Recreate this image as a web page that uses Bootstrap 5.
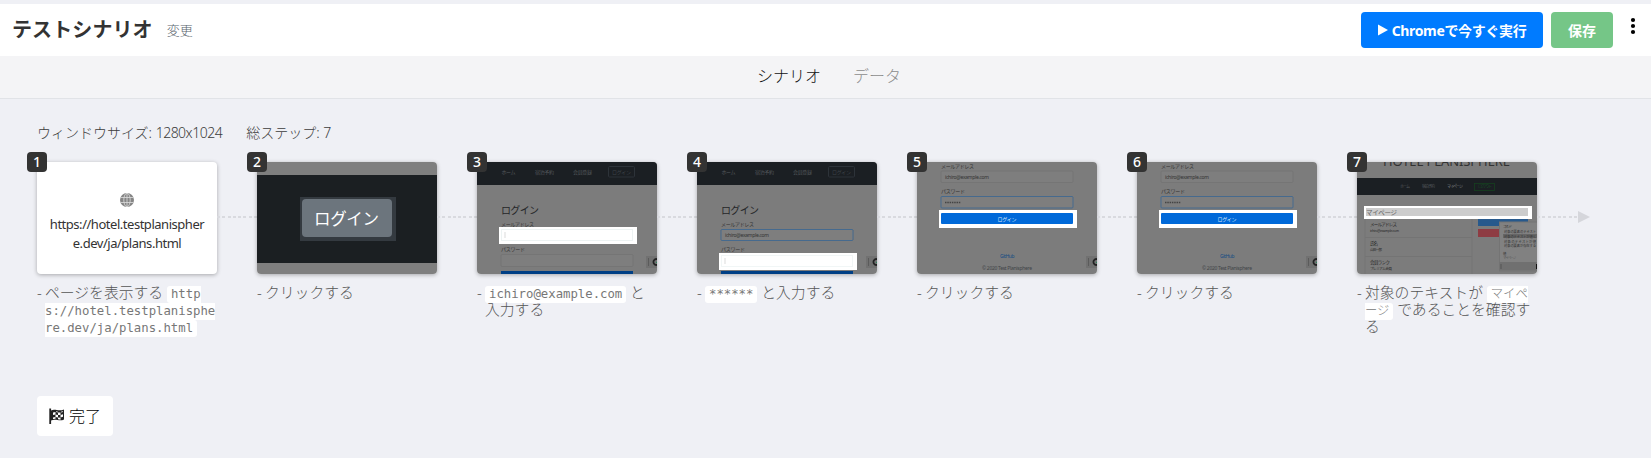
<!DOCTYPE html>
<html lang="ja">
<head>
  <meta charset="UTF-8">
  <meta name="viewport" content="width=device-width, initial-scale=1.0">
  <title>テストシナリオ</title>
  <link href="https://cdn.jsdelivr.net/npm/bootstrap@5.3.0/dist/css/bootstrap.min.css" rel="stylesheet">
  <style>
    body {
      font-family: "Noto Sans", "Noto Sans CJK JP", sans-serif;
      font-size: 14px;
      font-weight: 300;
      color: #333;
      background-color: #eff0f5;
      overflow: hidden;
    }
    .topbar {
      height: 52px;
      margin-top: 4px;
      padding: 0 12px;
    }
    .topbar h1 { font-size: 20px; letter-spacing: .1px; }
    .rename-link { font-size: 13px; color: #59636d; padding-top: 1px; margin-left: 14px; }
    .topbar .btn {
      height: 36px;
      padding: 0 16px;
      font-size: 14px;
      font-weight: 700;
      border: 0;
      border-radius: 4px;
    }
    .btn-run, .btn-run:hover { width: 182px; background-color: #007bff; color: #fff; }
    .btn-run span { letter-spacing: -.35px; }
    .btn-save, .btn-save:hover { width: 62px; background-color: #75c687; color: #fff; }
    .tabs-row {
      height: 43px;
      padding-left: 7px;
      padding-bottom: 3px;
      background-color: #f4f4f6;
      border-bottom: 1px solid #e1e3e7;
    }
    .tabs-row .nav-link { padding: 0 16px; font-size: 16px; color: #8c8c8c; }
    .tabs-row .nav-link.active { color: #111; }
    .scenario { padding: 23px 37px 0; }
    .meta { font-size: 14px; line-height: 21px; color: #3c3c3c; gap: 24px; }
    .meta .size-value { letter-spacing: -.5px; }
    .steps { margin-top: 19px; height: 234px; }
    .step { width: 180px; margin-right: 40px; }
    .thumb {
      height: 112px;
      border-radius: 4px;
      background-color: #fff;
      box-shadow: 0 1px 4px rgba(0, 0, 0, .3);
    }
    .thumb svg { display: block; border-radius: 4px; font-weight: 400; }
    .thumb-url {
      padding: 10px 12px 0;
      font-size: 13px;
      font-weight: 400;
      line-height: 19px;
      letter-spacing: -.47px;
      word-break: break-all;
      color: #333;
    }
    .num {
      left: -10px;
      top: -10px;
      width: 20px;
      height: 20px;
      line-height: 20px;
      border-radius: 4px;
      background-color: #333;
      color: #fff;
      font-size: 14px;
      font-weight: 500;
    }
    .wire {
      left: 180px;
      top: 54px;
      width: 40px;
      height: 2px;
      background: repeating-linear-gradient(90deg, #d9dadf 0 3px, transparent 3px 5.28px);
    }
    .wire-end::after {
      content: "";
      position: absolute;
      right: -13px;
      top: -5px;
      border: 6px solid transparent;
      border-left: 12px solid #d5d6db;
      border-right: 0;
    }
    .caption-text {
      margin-top: 10px;
      padding-left: 8px;
      text-indent: -8px;
      font-size: 14.8px;
      line-height: 17px;
      color: #555;
      word-break: break-all;
    }
    .caption-text .dash { display: inline-block; width: 8px; text-indent: 0; }
    .caption-text code {
      font-family: "DejaVu Sans Mono", "Noto Sans CJK JP", monospace;
      font-size: 12.3px;
      line-height: 1;
      padding: 1px 4px 2px;
      border-radius: 3px;
      background-color: #fff;
      color: #777;
    }
    .btn-done {
      width: 76px;
      height: 40px;
      padding: 0;
      font-size: 16px;
      font-weight: 300;
      border: 0;
      border-radius: 4px;
      background-color: #fff;
      color: #000;
    }
  </style>
</head>
<body>
  <!-- Shared drawings for the form previews -->
  <svg width="0" height="0" class="position-absolute fw-normal">
    <defs>
      <symbol id="captcha" viewBox="0 0 12 12">
        <rect width="12" height="12" fill="#717171"/>
        <path d="M2.5 2v8" stroke="#555" stroke-width=".8"/>
        <path d="M11.5 3.200A3 3 0 1 0 11.5 8.800" fill="none" stroke="#222" stroke-width="1.800"/>
        <path d="M10 6.4h2" stroke="#285" stroke-width="1"/>
      </symbol>
      <symbol id="loginTop" viewBox="0 0 180 112">
        <rect width="180" height="112" fill="#7c7c7c"/>
        <rect width="180" height="23" fill="#1b1f23"/>
        <g font-size="5" fill="#54585c">
          <text x="24.5" y="12" textLength="14">ホーム</text>
          <text x="58" y="12" textLength="19">宿泊予約</text>
          <text x="96" y="12" textLength="19">会員登録</text>
          <text x="135" y="12" textLength="19" fill="#3d4349">ログイン</text>
        </g>
        <rect x="131.5" y="4.500" width="26" height="10.500" rx="1" fill="none" stroke="#2d3339"/>
        <text x="24" y="51.500" font-size="10" textLength="38" fill="#252729">ログイン</text>
        <text x="24" y="64" font-size="5" textLength="33" fill="#333">メールアドレス</text>
        <text x="24" y="89" font-size="5" textLength="24" fill="#333">パスワード</text>
        <rect x="24" y="67.500" width="132" height="11" rx="1" fill="#7e7e7e" stroke="#757575"/>
        <rect x="24" y="92.500" width="132" height="12" rx="1" fill="#7e7e7e" stroke="#757575"/>
        <rect x="24" y="109" width="132" height="3" fill="#003f85"/>
        <use href="#captcha" x="169" y="94" width="12" height="12"/>
      </symbol>
      <symbol id="loginBottom" viewBox="0 0 180 112">
        <rect width="180" height="112" fill="#7c7c7c"/>
        <text x="24" y="5.500" font-size="5" textLength="33" fill="#333">メールアドレス</text>
        <rect x="24" y="9" width="132" height="11.500" rx="1" fill="#7e7e7e" stroke="#757575"/>
        <text x="28" y="17" font-size="5" textLength="44" fill="#333">ichiro@example.com</text>
        <text x="24" y="31" font-size="5" textLength="24" fill="#333">パスワード</text>
        <rect x="24" y="34.500" width="132" height="11.500" rx="1" fill="#7e7e7e" stroke="#466a8e"/>
        <path d="M28 40.500h16" stroke="#444" stroke-width="1.300" stroke-dasharray="1.500 .8"/>
        <rect x="22" y="48" width="138" height="18" fill="#fff"/>
        <rect x="24" y="51" width="132" height="11" rx="1" fill="#0069d9"/>
        <text x="80.500" y="58.500" font-size="5" textLength="19" fill="#d6e7fa">ログイン</text>
        <text x="83" y="96" font-size="5" textLength="14.500" fill="#174c84">GitHub</text>
        <text x="65" y="108" font-size="5" textLength="50" fill="#414448">© 2020 Test Planisphere</text>
        <use href="#captcha" x="169" y="94" width="12" height="12"/>
      </symbol>
    </defs>
  </svg>

  <!-- Header -->
  <header class="topbar bg-white d-flex align-items-center">
    <h1 class="fw-bold mb-0">テストシナリオ</h1>
    <a href="#" class="rename-link text-decoration-none">変更</a>
    <div class="d-flex align-items-center ms-auto">
      <button type="button" class="btn btn-run d-flex align-items-center justify-content-center me-2 text-nowrap">
        <svg width="10" height="12" viewBox="0 0 10 12" class="me-1 flex-shrink-0"><path d="M0 0.500L10 6L0 11.500z" fill="#fff"/></svg>
        <span>Chromeで今すぐ実行</span>
      </button>
      <button type="button" class="btn btn-save">保存</button>
      <svg width="10" height="20" viewBox="0 0 10 20" class="ms-3 mb-2" fill="#000"><circle cx="4" cy="4" r="2.100"/><circle cx="4" cy="10" r="2.100"/><circle cx="4" cy="16" r="2.100"/></svg>
    </div>
  </header>

  <!-- Tabs -->
  <nav class="tabs-row nav justify-content-center align-items-center">
    <a class="nav-link active" href="#">シナリオ</a>
    <a class="nav-link" href="#">データ</a>
  </nav>

  <!-- Scenario -->
  <main class="scenario">
    <div class="meta d-flex">
      <span>ウィンドウサイズ: <span class="size-value">1280x1024</span></span>
      <span>総ステップ: 7</span>
    </div>

    <div class="steps d-flex">
      <div class="step flex-shrink-0">
        <div class="thumb position-relative">
          <div class="thumb-url h-100 d-flex flex-column align-items-center justify-content-center text-center">
            <svg width="14" height="14" viewBox="0 0 14 14" class="mb-2 flex-shrink-0" fill="none" stroke="#ddd" stroke-width=".8">
              <circle cx="7" cy="7" r="7" fill="#858585" stroke="none"/>
              <ellipse cx="7" cy="7" rx="3.200" ry="6.800"/>
              <path d="M7 0v14M0.500 4.500h13M0.500 9.500h13"/>
            </svg>
            <span>https://hotel.testplanisphere.dev/ja/plans.html</span>
          </div>
          <span class="num position-absolute text-center">1</span>
          <span class="wire position-absolute"></span>
        </div>
        <div class="caption-text"><span class="dash">-</span>ページを表示する <code>https://hotel.testplanisphere.dev/ja/plans.html</code></div>
      </div>

      <div class="step flex-shrink-0">
        <div class="thumb position-relative">
          <svg width="180" height="112" viewBox="0 0 180 112">
            <rect width="180" height="112" fill="#7f7f7f"/>
            <rect y="13" width="180" height="88" fill="#1b1f22"/>
            <rect x="43" y="35" width="96" height="44" fill="#343a40"/>
            <rect x="45" y="37" width="90" height="38" rx="4" fill="#6c757d"/>
            <text x="57" y="63" font-size="16.500" textLength="65" fill="#fff">ログイン</text>
          </svg>
          <span class="num position-absolute text-center">2</span>
          <span class="wire position-absolute"></span>
        </div>
        <div class="caption-text"><span class="dash">-</span>クリックする</div>
      </div>

      <div class="step flex-shrink-0">
        <div class="thumb position-relative">
          <svg width="180" height="112" viewBox="0 0 180 112">
            <use href="#loginTop" width="180" height="112"/>
            <rect x="22" y="65" width="138" height="17" fill="#fff"/>
            <rect x="24.500" y="67.500" width="131" height="11" fill="none" stroke="#edf3f3"/>
            <path d="M28 70v6" stroke="#ccc" stroke-width=".7"/>
          </svg>
          <span class="num position-absolute text-center">3</span>
          <span class="wire position-absolute"></span>
        </div>
        <div class="caption-text"><span class="dash">-</span><code>ichiro@example.com</code> と入力する</div>
      </div>

      <div class="step flex-shrink-0">
        <div class="thumb position-relative">
          <svg width="180" height="112" viewBox="0 0 180 112">
            <use href="#loginTop" width="180" height="112"/>
            <rect x="24" y="67.500" width="132" height="11" rx="1" fill="#7e7e7e" stroke="#466a8e"/>
            <text x="28" y="75" font-size="5" textLength="44" fill="#333">ichiro@example.com</text>
            <rect x="22" y="91" width="138" height="17" fill="#fff"/>
            <rect x="24.500" y="93.500" width="131" height="11" fill="none" stroke="#f1f6f6"/>
            <path d="M28 96v6" stroke="#ccc" stroke-width=".7"/>
          </svg>
          <span class="num position-absolute text-center">4</span>
          <span class="wire position-absolute"></span>
        </div>
        <div class="caption-text"><span class="dash">-</span><code>******</code> と入力する</div>
      </div>

      <div class="step flex-shrink-0">
        <div class="thumb position-relative">
          <svg width="180" height="112" viewBox="0 0 180 112"><use href="#loginBottom" width="180" height="112"/></svg>
          <span class="num position-absolute text-center">5</span>
          <span class="wire position-absolute"></span>
        </div>
        <div class="caption-text"><span class="dash">-</span>クリックする</div>
      </div>

      <div class="step flex-shrink-0">
        <div class="thumb position-relative">
          <svg width="180" height="112" viewBox="0 0 180 112"><use href="#loginBottom" width="180" height="112"/></svg>
          <span class="num position-absolute text-center">6</span>
          <span class="wire position-absolute"></span>
        </div>
        <div class="caption-text"><span class="dash">-</span>クリックする</div>
      </div>

      <div class="step flex-shrink-0">
        <div class="thumb position-relative">
          <svg width="180" height="112" viewBox="0 0 180 112">
            <rect width="180" height="112" fill="#7c7c7c"/>
            <text x="26" y="4" font-size="13" textLength="127" fill="#333">HOTEL PLANISPHERE</text>
            <rect y="16" width="180" height="17" fill="#1b1f23"/>
            <g font-size="4" fill="#54585c">
              <text x="43" y="26" textLength="10">ホーム</text>
              <text x="65" y="26" textLength="13">宿泊予約</text>
              <text x="90" y="26" textLength="16" fill="#83878b">マイページ</text>
              <text x="121" y="26" textLength="14" fill="#164d23">ログアウト</text>
            </g>
            <rect x="117.500" y="21.500" width="20" height="7" fill="none" stroke="#164020" stroke-width=".8"/>
            <rect x="8" y="56" width="107" height="58" fill="none" stroke="#747474"/>
            <path d="M8 75.500h107M8 94.500h107" stroke="#747474"/>
            <g font-size="4.500" fill="#282828">
              <text x="13" y="63.500" textLength="27">メールアドレス</text>
              <text x="13" y="69.500" font-size="3.500" textLength="29">ichiro@example.com</text>
              <text x="13" y="82.500" textLength="8">氏名</text>
              <text x="13" y="88.500" font-size="3.500" textLength="12">山田一郎</text>
              <text x="13" y="101.500" textLength="20">会員ランク</text>
              <text x="13" y="107.500" font-size="3.500" textLength="22">プレミアム会員</text>
            </g>
            <rect x="121" y="56" width="50" height="8" fill="#27598c"/>
            <rect x="121" y="67" width="24" height="8" fill="#8e3c43"/>
            <rect x="142.500" y="60" width="38" height="49" fill="#818181" stroke="#747474"/>
            <g font-size="3.300" fill="#333">
              <text x="146" y="66" textLength="9">コマンド</text>
              <text x="147" y="71" textLength="32">対象の要素のテキスト</text>
              <rect x="146" y="72" width="34" height="4" fill="#666"/>
              <text x="147" y="75.500" textLength="32">対象のテキストが値と</text>
              <text x="147" y="80.500" textLength="32">対象のテキストが値</text>
              <text x="147" y="85" textLength="32">対象の要素が存在する</text>
              <text x="146" y="92.500" textLength="4">値</text>
              <text x="146" y="97" textLength="13" fill="#555">マイページ</text>
            </g>
            <rect x="142.500" y="100" width="38" height="8.500" fill="#707070"/>
            <path d="M144 102v5" stroke="#555"/>
            <rect x="179" y="102" width="1" height="5" fill="#111"/>
            <rect x="7" y="44" width="168" height="13" fill="#fff"/>
            <rect x="9" y="46" width="162" height="8" fill="#ccc"/>
            <text x="9" y="52.500" font-size="6.500" textLength="31" fill="#666">マイページ</text>
          </svg>
          <span class="num position-absolute text-center">7</span>
          <span class="wire wire-end position-absolute"></span>
        </div>
        <div class="caption-text"><span class="dash">-</span>対象のテキストが <code>マイページ</code> であることを確認する</div>
      </div>
    </div>

    <button type="button" class="btn btn-done d-flex align-items-center justify-content-center">
      <svg width="16" height="16" viewBox="0 0 16 16" class="me-1">
        <path d="M1.200 0.500v15.500" stroke="#222" stroke-width="1.800"/>
        <path d="M2 2.500C6 0 9 4 15 1.500V11.500C10 14 7 10 2 12.500z" fill="#222"/>
        <path d="M4 4.500l2.500-.5v2.500L4 7zM9 4.500h2.500V7H9zM6.500 6.500L9 7v2.500l-2.500-.5zM11.500 7l2.500-.8v2.500l-2.500.8zM4 9.500L6.500 9v1.800L4 11zM9 9.500l2.500.2v2L9 11.200zM7 3.200l2 .5V4.500L7 4zM12 3.800l2-.6V4l-2 .5z" fill="#fff"/>
      </svg>
      <span>完了</span>
    </button>
  </main>

  <script src="https://cdn.jsdelivr.net/npm/bootstrap@5.3.0/dist/js/bootstrap.bundle.min.js"></script>
</body>
</html>
